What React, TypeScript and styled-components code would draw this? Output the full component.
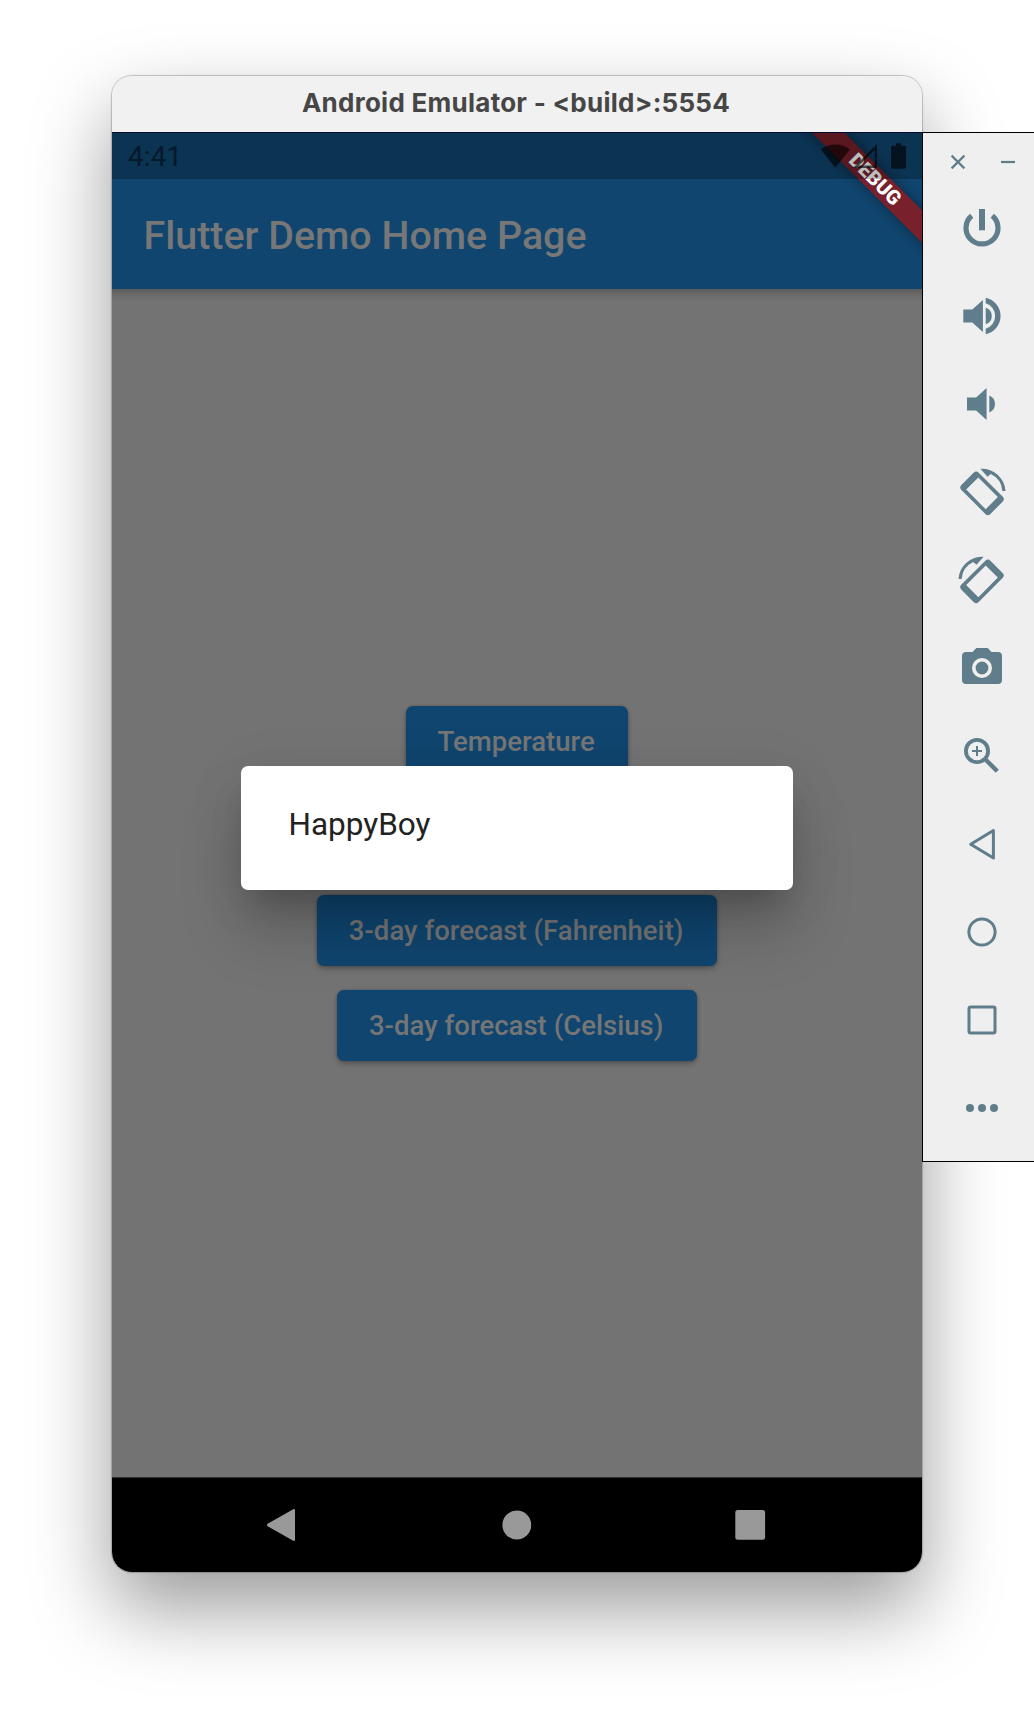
import React from "react";
import styled, { createGlobalStyle } from "styled-components";

const slate = "#607d8b";
const blue = "#10456f";
const dimmed = "#737373";

const Global = createGlobalStyle`
  html, body { margin: 0; padding: 0; background: #fff; }
  * { box-sizing: border-box; }
`;

const Desktop = styled.div`
  display: flex;
  align-items: flex-start;
  width: 1034px;
  height: 1720px;
  padding: 76px 0 0 112px;
  overflow: hidden;
  background: #fff;
  font-family: Roboto, "Liberation Sans", sans-serif;
`;

const Window = styled.main`
  display: flex;
  flex-direction: column;
  flex: none;
  width: 810px;
  height: 1495.5px;
  border-radius: 20px;
  overflow: hidden;
  box-shadow: 0 0 1px 1px rgba(0, 0, 0, 0.22), 0 36px 80px rgba(0, 0, 0, 0.4);
`;

const TitleBar = styled.header`
  display: flex;
  align-items: center;
  justify-content: center;
  height: 56px;
  padding: 0 2px 2px 0;
  background: #f1f1f1;
  color: #464646;
  font: 700 26px/1 Inter, sans-serif;
  letter-spacing: 0.26px;
  white-space: pre;
`;

const Screen = styled.section`
  position: relative;
  display: flex;
  flex-direction: column;
  height: 1345px;
  border-top: 1px solid #020b2c;
  background: ${dimmed};
`;

const AppBar = styled.div`
  position: relative;
  overflow: hidden;
  flex: none;
  height: 156px;
  background: ${blue};
`;

const AppBarShadow = styled.div`
  flex: none;
  height: 13px;
  margin-bottom: -13px;
  background: linear-gradient(rgba(0, 0, 0, 0.2), rgba(0, 0, 0, 0.07) 45%, rgba(0, 0, 0, 0));
`;

const StatusBar = styled.div`
  position: relative;
  z-index: 2;
  display: flex;
  align-items: center;
  justify-content: space-between;
  height: 46px;
  padding: 0 16px;
  background: rgba(0, 0, 0, 0.26);
`;

const Clock = styled.span`
  font-size: 27.8px;
  line-height: 46px;
  padding-top: 2px;
  color: #06192a;
  letter-spacing: 0.2px;
`;

const StatusIcons = styled.svg`
  display: block;
  width: 86px;
  height: 28px;
  fill: rgba(0, 0, 0, 0.62);
`;

const PageTitle = styled.h1`
  margin: 0;
  padding-left: 31.5px;
  font-size: 39.4px;
  font-weight: 500;
  line-height: 114px;
  color: #777;
  white-space: pre;
`;

const DebugBanner = styled.div`
  position: absolute;
  z-index: 1;
  top: 35.2px;
  right: -42.8px;
  width: 180px;
  height: 23px;
  transform: rotate(45deg);
  background: #78202b;
  box-shadow: 0 0 12px rgba(0, 0, 0, 0.4);
  color: #fff;
  font-size: 20px;
  font-weight: 900;
  line-height: 23px;
  text-align: center;
`;

const Body = styled.div`
  display: flex;
  flex: 1;
  flex-direction: column;
  align-items: center;
  justify-content: center;
  gap: 23.5px;
  padding-top: 1.4px;
`;

const Raised = styled.button`
  height: 71px;
  padding: 0 33.2px 0 31.5px;
  border: 0;
  border-radius: 7px;
  background: ${blue};
  color: #757575;
  box-shadow: 0 3px 5px rgba(0, 0, 0, 0.24), 0 0 3px rgba(0, 0, 0, 0.2);
  font: 500 27.5px/71px Roboto, sans-serif;
  letter-spacing: 0.03px;
  white-space: pre;
`;

const CoveredRow = styled.div`
  height: 71px;
`;

const DialogLayer = styled.div`
  position: absolute;
  inset: 46px 0 0;
  display: flex;
  align-items: center;
  justify-content: center;
`;

const Dialog = styled.div`
  width: 551.4px;
  height: 124px;
  padding: 0 47.2px;
  border-radius: 7px;
  background: #fff;
  box-shadow: 0 22px 30px -14px rgba(0, 0, 0, 0.2), 0 42px 60px 2px rgba(0, 0, 0, 0.17),
    0 8px 60px 4px rgba(0, 0, 0, 0.06);
  color: #222;
  font-size: 31.5px;
  line-height: 118px;
`;

const NavBar = styled.nav`
  display: flex;
  flex: 1;
  align-items: center;
  justify-content: space-between;
  padding: 0 152px 0 150px;
  border-top: 1px solid #303030;
  background: #000;
`;

const NavIcon = styled.svg`
  display: block;
  width: 40px;
  height: 40px;
  fill: #999;
`;

const Toolbar = styled.aside`
  position: relative;
  flex: none;
  width: 112px;
  height: 1030px;
  margin-top: 56px;
  border: solid #000;
  border-width: 1px 0 1px 1px;
  background: #efefef;
`;

const WindowControls = styled.div`
  display: flex;
  align-items: center;
  justify-content: space-between;
  height: 51px;
  padding: 6px 16px 0 25px;
`;

const ControlIcon = styled.svg`
  display: block;
  width: 20px;
  height: 20px;
  fill: none;
  stroke: ${slate};
  stroke-width: 2.2;
`;

const Tools = styled.div`
  display: flex;
  flex-direction: column;
  padding-left: 7px;
`;

const Tool = styled.button`
  display: flex;
  align-items: center;
  justify-content: center;
  width: 104px;
  height: 88px;
  padding: 0;
  border: 0;
  background: none;
`;

const ToolIcon = styled.svg`
  display: block;
  width: 48px;
  height: 48px;
  overflow: visible;
  fill: ${slate};
`;

const line = { fill: "none", stroke: slate };

const rotatedPhone = (
  <>
    <path
      fillRule="evenodd"
      transform="translate(0 1.3) rotate(45)"
      d="M-16.9 -12.2H16.9A3.6 3.6 0 0 1 20.5 -8.6V8.6A3.6 3.6 0 0 1 16.9 12.2H-16.9A3.6 3.6 0 0 1 -20.5 8.6V-8.6A3.6 3.6 0 0 1 -16.9 -12.2ZM-13.8 -8.6V8.6H13.8V-8.6Z"
    />
    <path d="M-1.6 -23.2A23.5 23.5 0 0 1 23.5 -1H20.4A20.4 20.4 0 0 0 8.8 -18L5.5 -15.2Z" />
  </>
);

const tools: { name: string; art: React.ReactNode }[] = [
  {
    name: "Power",
    art: (
      <>
        <path {...line} strokeWidth="5.2" d="M-10.3 -12.3A16 16 0 1 0 10.3 -12.3" />
        <path d="M-3 -19H3V2.3H-3Z" />
      </>
    ),
  },
  {
    name: "Volume up",
    art: (
      <path d="M-18.7 -6.5H-9.7L.9 -16V16L-9.7 6.5H-18.7ZM3.7 -8.3A8.7 8.7 0 0 1 3.7 8.3ZM3.7 -18.3A18.7 18.7 0 0 1 3.7 18.3V12.8A13.4 13.4 0 0 0 3.7 -12.8Z" />
    ),
  },
  {
    name: "Volume down",
    art: <path d="M-15 -6.5H-5.9L4.6 -16V16L-5.9 6.5H-15ZM7.3 -8.5A9.2 9.2 0 0 1 7.3 8.5Z" />,
  },
  { name: "Rotate left", art: rotatedPhone },
  { name: "Rotate right", art: <g transform="scale(-1 1)">{rotatedPhone}</g> },
  {
    name: "Screenshot",
    art: (
      <>
        <path
          fillRule="evenodd"
          d="M-5.7 -20H5.7L9.5 -16H16A4 4 0 0 1 20 -12V12A4 4 0 0 1 16 16H-16A4 4 0 0 1 -20 12V-12A4 4 0 0 1 -16 -16H-9.5ZM0 -10A10 10 0 1 0 0 10A10 10 0 1 0 0 -10Z"
        />
        <circle r="6.4" />
      </>
    ),
  },
  {
    name: "Zoom",
    art: (
      <g {...line}>
        <circle cx="-5" cy="-5" r="11.1" strokeWidth="3.8" />
        <path strokeWidth="2" d="M-10 -5H0M-5 -10V0" />
        <path strokeWidth="4.4" d="M3.5 3.5L15.3 15.3" />
      </g>
    ),
  },
  {
    name: "Back",
    art: <path {...line} strokeWidth="3" strokeLinejoin="round" d="M-11.3 .2L11.4 -13.5V14Z" />,
  },
  { name: "Home", art: <circle {...line} strokeWidth="3" r="13.1" /> },
  {
    name: "Overview",
    art: <rect {...line} strokeWidth="3" x="-13" y="-13" width="26" height="26" rx="1.5" />,
  },
  {
    name: "More",
    art: (
      <>
        <circle cx="-12" r="4" />
        <circle r="4" />
        <circle cx="12" r="4" />
      </>
    ),
  },
];

export default function App() {
  return (
    <>
      <Global />
      <Desktop>
        <Window>
          <TitleBar>{"Android Emulator - <build>:5554"}</TitleBar>
          <Screen>
            <AppBar>
              <StatusBar>
                <Clock>4:41</Clock>
                <StatusIcons viewBox="820 141 86 28">
                  <path d="M820.8 148.6A23.5 23.5 0 0 1 849.8 148.6L835.3 166.8Z" />
                  <path fillRule="evenodd" d="M877 143V167H853ZM874.6 149L859 164.6H874.6Z" />
                  <path d="M896 142.3H901V144.8H904.3Q906 144.8 906 146.5V166Q906 167.8 904.3 167.8H892.7Q891 167.8 891 166V146.5Q891 144.8 892.7 144.8H896Z" />
                </StatusIcons>
              </StatusBar>
              <PageTitle>Flutter Demo Home Page</PageTitle>
              <DebugBanner>DEBUG</DebugBanner>
            </AppBar>
            <AppBarShadow />
            <Body>
              <Raised>Temperature</Raised>
              <CoveredRow />
              <Raised>3-day forecast (Fahrenheit)</Raised>
              <Raised>3-day forecast (Celsius)</Raised>
            </Body>
            <DialogLayer>
              <Dialog role="dialog">HappyBoy</Dialog>
            </DialogLayer>
          </Screen>
          <NavBar>
            <NavIcon viewBox="-20 -20 40 40">
              <path d="M-14.4 -1.2L10.8 -15.6Q13 -16.6 13 -14.6V14.6Q13 16.6 10.8 15.6L-14.4 1.2Q-15.6 0 -14.4 -1.2Z" />
            </NavIcon>
            <NavIcon viewBox="-20 -20 40 40">
              <circle cx="0.8" r="14.4" />
            </NavIcon>
            <NavIcon viewBox="-20 -20 40 40">
              <rect x="-14.7" y="-15" width="29.8" height="29.8" rx="2.5" />
            </NavIcon>
          </NavBar>
        </Window>
        <Toolbar>
          <WindowControls>
            <ControlIcon viewBox="-10 -10 20 20">
              <path d="M-6.4 -6.4L6.4 6.4M6.4 -6.4L-6.4 6.4" />
            </ControlIcon>
            <ControlIcon viewBox="-10 -10 20 20">
              <path d="M-7 0H7" />
            </ControlIcon>
          </WindowControls>
          <Tools>
            {tools.map((t) => (
              <Tool key={t.name} aria-label={t.name}>
                <ToolIcon viewBox="-24 -24 48 48">{t.art}</ToolIcon>
              </Tool>
            ))}
          </Tools>
        </Toolbar>
      </Desktop>
    </>
  );
}
